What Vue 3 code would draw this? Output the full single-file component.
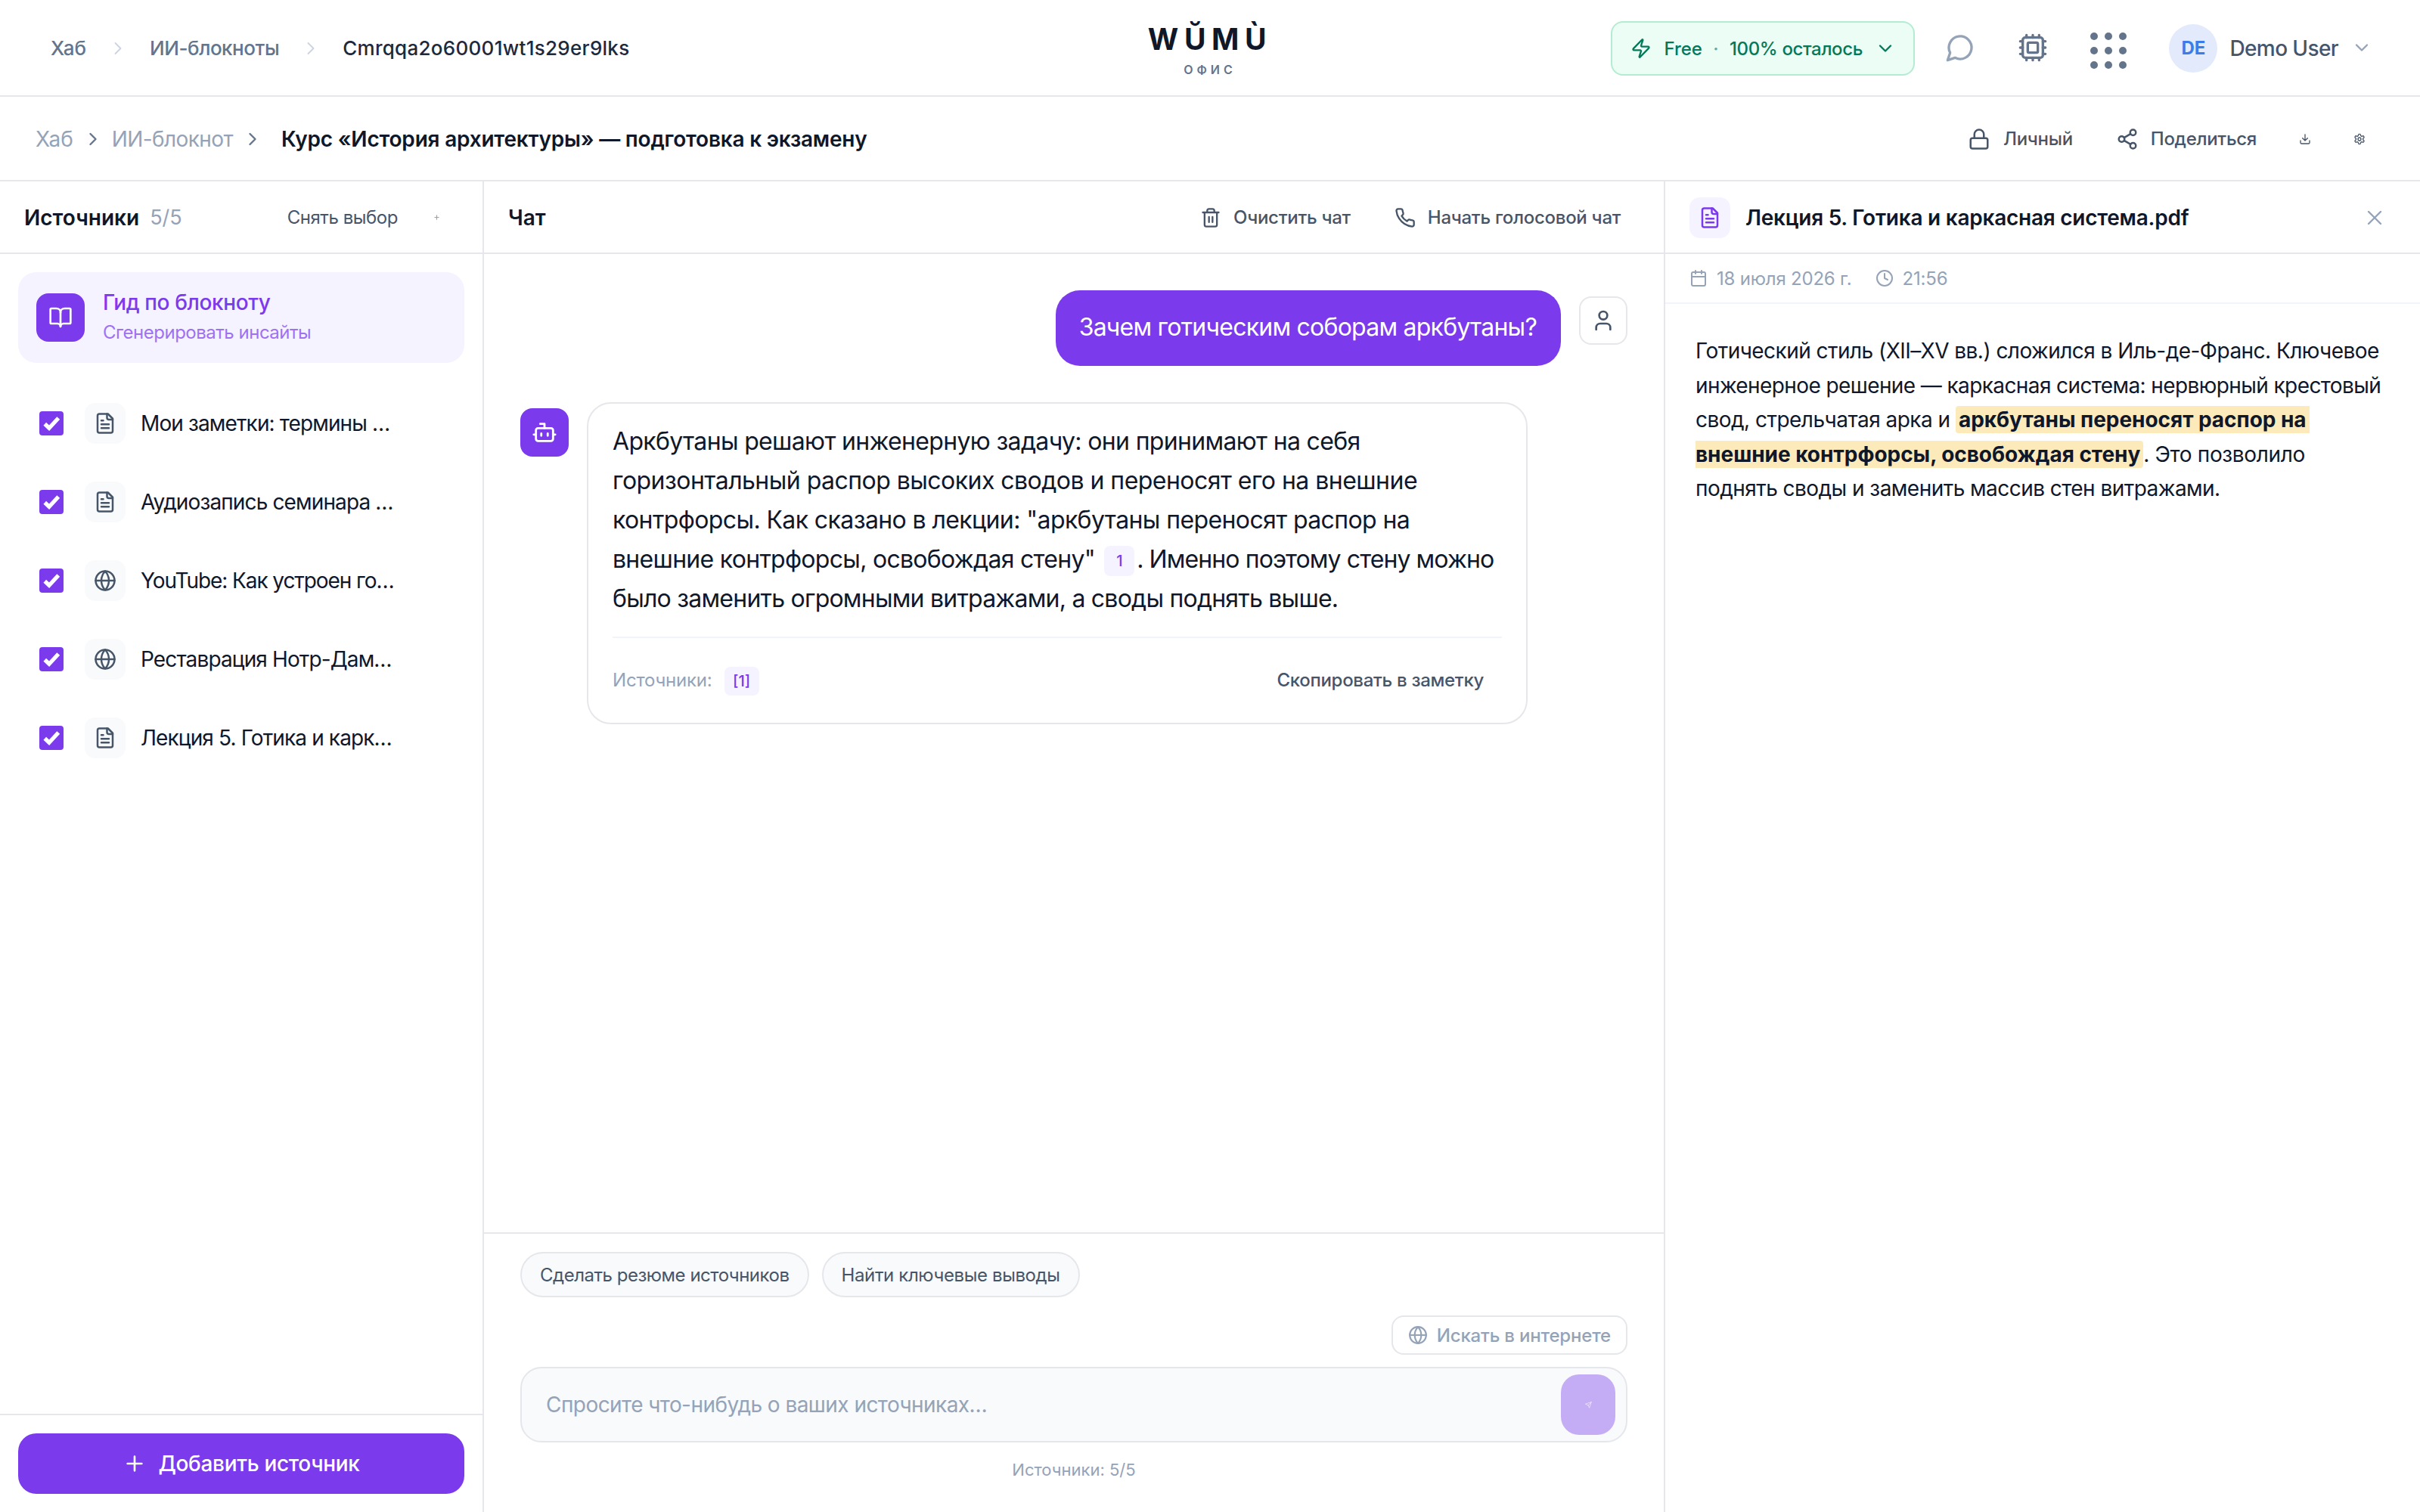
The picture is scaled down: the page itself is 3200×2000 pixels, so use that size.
<template>
  <div class="app">
    <header class="topbar">
      <nav class="trail">
        <span class="t-hub">Хаб</span>
        <Icon name="chevronRight" class="sep" />
        <span class="t-books">ИИ-блокноты</span>
        <Icon name="chevronRight" class="sep" />
        <span class="t-id">Cmrqqa2o60001wt1s29er9lks</span>
      </nav>

      <div class="brand">
        <div class="brand-name">WŬMÙ</div>
        <div class="brand-sub">ОФИС</div>
      </div>

      <div class="top-tools">
        <button class="plan">
          <Icon name="zap" class="plan-zap" />
          <span class="plan-name">Free</span>
          <span class="plan-dot">·</span>
          <span class="plan-left">100% осталось</span>
          <Icon name="chevronDown" class="plan-chevron" />
        </button>
        <Icon name="message" class="tool-message" />
        <Icon name="cpu" class="tool-cpu" />
        <div class="grid-dots">
          <i v-for="n in 9" :key="n" />
        </div>
        <div class="avatar">DE</div>
        <span class="user-name">Demo User</span>
        <Icon name="chevronDown" class="user-chevron" />
      </div>
    </header>

    <div class="subbar">
      <nav class="crumbs">
        <span class="c-hub">Хаб</span>
        <Icon name="chevronRight" class="c-sep" />
        <span class="c-book">ИИ-блокнот</span>
        <Icon name="chevronRight" class="c-sep" />
        <h1>Курс «История архитектуры» — подготовка к экзамену</h1>
      </nav>
      <div class="actions">
        <Icon name="lock" class="a-icon" />
        <span class="a-private">Личный</span>
        <Icon name="share" class="a-icon" />
        <span class="a-share">Поделиться</span>
        <Icon name="download" class="a-small" />
        <Icon name="settings" class="a-small" />
      </div>
    </div>

    <div class="columns">
      <aside class="sources">
        <div class="panel-head">
          <h2 class="sources-title">Источники</h2>
          <span class="sources-count">5/5</span>
          <button class="deselect">Снять выбор</button>
          <Icon name="plus" class="tiny-plus" />
        </div>

        <div class="sources-body">
          <div class="guide">
            <div class="guide-icon">
              <Icon name="book" />
            </div>
            <div class="guide-text">
              <div class="guide-title">Гид по блокноту</div>
              <div class="guide-sub">Сгенерировать инсайты</div>
            </div>
          </div>

          <ul class="source-list">
            <li v-for="source in sources" :key="source.title">
              <span class="check">
                <Icon name="check" />
              </span>
              <span class="source-icon">
                <Icon :name="source.icon" />
              </span>
              <span class="source-title">{{ source.title }}</span>
            </li>
          </ul>
        </div>

        <div class="sources-foot">
          <button class="add-btn">
            <Icon name="plus" />
            <span>Добавить источник</span>
          </button>
        </div>
      </aside>

      <main class="chat">
        <div class="panel-head">
          <h2 class="chat-title">Чат</h2>
          <button class="head-btn">
            <Icon name="trash" />
            <span class="clear-label">Очистить чат</span>
          </button>
          <button class="head-btn">
            <Icon name="phone" />
            <span class="voice-label">Начать голосовой чат</span>
          </button>
        </div>

        <div class="messages">
          <div class="msg-user">
            <div class="bubble-user">Зачем готическим соборам аркбутаны?</div>
            <div class="face-user">
              <Icon name="user" />
            </div>
          </div>

          <div class="msg-bot">
            <div class="face-bot">
              <Icon name="bot" />
            </div>
            <div class="bubble-bot">
              <p>
                <span class="b1">Аркбутаны решают инженерную задачу: они принимают на себя</span><br>
                <span class="b2">горизонтальный распор высоких сводов и переносят его на внешние</span><br>
                <span class="b3">контрфорсы. Как сказано в лекции: "аркбутаны переносят распор на</span><br>
                <span class="b4">внешние контрфорсы, освобождая стену" <span class="cite">1</span></span><span class="b4-end">. Именно поэтому стену можно</span><br>
                <span class="b5">было заменить огромными витражами, а своды поднять выше.</span>
              </p>
              <div class="bubble-foot">
                <span class="foot-label">Источники:</span>
                <span class="foot-cite">[1]</span>
                <button class="copy-btn">Скопировать в заметку</button>
              </div>
            </div>
          </div>
        </div>

        <div class="composer">
          <div class="chips">
            <button class="chip chip-summary">Сделать резюме источников</button>
            <button class="chip chip-findings">Найти ключевые выводы</button>
          </div>
          <button class="web-btn">
            <Icon name="globe" />
            <span>Искать в интернете</span>
          </button>
          <div class="input">
            <span class="placeholder">Спросите что-нибудь о ваших источниках…</span>
            <button class="send">
              <Icon name="send" />
            </button>
          </div>
          <div class="composer-note">Источники: 5/5</div>
        </div>
      </main>

      <aside class="viewer">
        <div class="panel-head">
          <div class="viewer-icon">
            <Icon name="file" />
          </div>
          <h2 class="viewer-title">Лекция 5. Готика и каркасная система.pdf</h2>
          <Icon name="close" class="viewer-close" />
        </div>
        <div class="viewer-meta">
          <Icon name="calendar" />
          <span class="meta-date">18 июля 2026 г.</span>
          <Icon name="clock" />
          <span class="meta-time">21:56</span>
        </div>
        <p class="viewer-text">
          <span class="v1">Готический стиль (XII–XV вв.) сложился в Иль-де-Франс. Ключевое</span><br>
          <span class="v2">инженерное решение — каркасная система: нервюрный крестовый</span><br>
          <span class="v3">свод, стрельчатая арка и </span><mark>аркбутаны переносят распор на&thinsp;<br>
            внешние контрфорсы, освобождая стену</mark><span class="v4">. Это позволило</span><br>
          <span class="v5">поднять своды и заменить массив стен витражами.</span>
        </p>
      </aside>
    </div>
  </div>
</template>

<script setup>
import { h } from 'vue';

const paths = {
  chevronRight: '<path d="m9 18 6-6-6-6"/>',
  chevronDown: '<path d="m6 9 6 6 6-6"/>',
  zap: '<path d="M4 14a1 1 0 0 1-.78-1.63l9.9-10.2a.5.5 0 0 1 .86.46l-1.92 6.02A1 1 0 0 0 13 10h7a1 1 0 0 1 .78 1.63l-9.9 10.2a.5.5 0 0 1-.86-.46l1.92-6.02A1 1 0 0 0 11 14z"/>',
  message: '<path d="M7.9 20A9 9 0 1 0 4 16.1L2 22Z"/>',
  cpu: '<rect width="16" height="16" x="4" y="4" rx="2"/><rect width="8" height="8" x="8" y="8" rx="1"/><path d="M12 20v2M12 2v2M17 20v2M17 2v2M2 12h2M2 17h2M2 7h2M20 12h2M20 17h2M20 7h2M7 20v2M7 2v2"/>',
  lock: '<rect width="18" height="11" x="3" y="11" rx="2"/><path d="M7 11V7a5 5 0 0 1 10 0v4"/>',
  share: '<circle cx="18" cy="5" r="3"/><circle cx="6" cy="12" r="3"/><circle cx="18" cy="19" r="3"/><path d="m8.59 13.51 6.83 3.98M15.41 6.51l-6.82 3.98"/>',
  download: '<path d="M21 15v4a2 2 0 0 1-2 2H5a2 2 0 0 1-2-2v-4M7 10l5 5 5-5M12 15V3"/>',
  settings: '<path d="M12.22 2h-.44a2 2 0 0 0-2 2v.18a2 2 0 0 1-1 1.73l-.43.25a2 2 0 0 1-2 0l-.15-.08a2 2 0 0 0-2.73.73l-.22.38a2 2 0 0 0 .73 2.73l.15.1a2 2 0 0 1 1 1.72v.51a2 2 0 0 1-1 1.74l-.15.09a2 2 0 0 0-.73 2.73l.22.38a2 2 0 0 0 2.73.73l.15-.08a2 2 0 0 1 2 0l.43.25a2 2 0 0 1 1 1.73V20a2 2 0 0 0 2 2h.44a2 2 0 0 0 2-2v-.18a2 2 0 0 1 1-1.73l.43-.25a2 2 0 0 1 2 0l.15.08a2 2 0 0 0 2.73-.73l.22-.39a2 2 0 0 0-.73-2.73l-.15-.08a2 2 0 0 1-1-1.74v-.5a2 2 0 0 1 1-1.74l.15-.09a2 2 0 0 0 .73-2.73l-.22-.38a2 2 0 0 0-2.73-.73l-.15.08a2 2 0 0 1-2 0l-.43-.25a2 2 0 0 1-1-1.73V4a2 2 0 0 0-2-2z"/><circle cx="12" cy="12" r="3"/>',
  plus: '<path d="M5 12h14M12 5v14"/>',
  book: '<path d="M12 7v14"/><path d="M3 18a1 1 0 0 1-1-1V4a1 1 0 0 1 1-1h5a4 4 0 0 1 4 4 4 4 0 0 1 4-4h5a1 1 0 0 1 1 1v13a1 1 0 0 1-1 1h-6a3 3 0 0 0-3 3 3 3 0 0 0-3-3z"/>',
  check: '<path d="M5 12.6 9.6 17 19.4 6.4"/>',
  file: '<path d="M15 2H6a2 2 0 0 0-2 2v16a2 2 0 0 0 2 2h12a2 2 0 0 0 2-2V7Z"/><path d="M14 2v4a2 2 0 0 0 2 2h4M10 9H8M16 13H8M16 17H8"/>',
  globe: '<circle cx="12" cy="12" r="10"/><path d="M12 2a14.5 14.5 0 0 0 0 20 14.5 14.5 0 0 0 0-20M2 12h20"/>',
  trash: '<path d="M3 6h18M19 6v14a2 2 0 0 1-2 2H7a2 2 0 0 1-2-2V6M8 6V4a2 2 0 0 1 2-2h4a2 2 0 0 1 2 2v2M10 11v6M14 11v6"/>',
  phone: '<path d="M22 16.92v3a2 2 0 0 1-2.18 2 19.79 19.79 0 0 1-8.63-3.07 19.5 19.5 0 0 1-6-6 19.79 19.79 0 0 1-3.07-8.67A2 2 0 0 1 4.11 2h3a2 2 0 0 1 2 1.72 12.84 12.84 0 0 0 .7 2.81 2 2 0 0 1-.45 2.11L8.09 9.91a16 16 0 0 0 6 6l1.27-1.27a2 2 0 0 1 2.11-.45 12.84 12.84 0 0 0 2.81.7A2 2 0 0 1 22 16.92z"/>',
  user: '<path d="M19 21v-2a4 4 0 0 0-4-4H9a4 4 0 0 0-4 4v2"/><circle cx="12" cy="7" r="4"/>',
  bot: '<path d="M12 8V4H8"/><rect width="16" height="12" x="4" y="8" rx="2"/><path d="M2 14h2M20 14h2M15 13v2M9 13v2"/>',
  send: '<path d="M22 2 11 13M22 2l-7 20-4-9-9-4Z"/>',
  close: '<path d="M18 6 6 18M6 6l12 12"/>',
  calendar: '<path d="M8 2v4M16 2v4M3 10h18"/><rect width="18" height="18" x="3" y="4" rx="2"/>',
  clock: '<circle cx="12" cy="12" r="10"/><path d="M12 6v6l4 2"/>'
};

const Icon = (props) => h('svg', {
  class: 'icon',
  viewBox: '0 0 24 24',
  innerHTML: paths[props.name]
});
Icon.props = ['name'];

const sources = [
  { icon: 'file', title: 'Мои заметки: термины …' },
  { icon: 'file', title: 'Аудиозапись семинара …' },
  { icon: 'globe', title: 'YouTube: Как устроен го…' },
  { icon: 'globe', title: 'Реставрация Нотр-Дам…' },
  { icon: 'file', title: 'Лекция 5. Готика и карк…' }
];
</script>

<style>
body {
  margin: 0;
  background: #fff;
}
</style>

<style scoped>
.app {
  display: flex;
  flex-direction: column;
  width: 3200px;
  height: 2000px;
  overflow: hidden;
  background: #fff;
  color: #0f172a;
  font-family: Inter, "Noto Sans", sans-serif;
  font-size: 28px;
  white-space: nowrap;
}

.app * {
  box-sizing: border-box;
}

button {
  padding: 0;
  border: none;
  background: none;
  font: inherit;
  color: inherit;
  letter-spacing: inherit;
}

h1,
h2,
p,
ul {
  margin: 0;
  padding: 0;
}

.icon {
  display: block;
  flex: none;
  width: 28px;
  height: 28px;
  fill: none;
  stroke: currentColor;
  stroke-width: 2;
  stroke-linecap: round;
  stroke-linejoin: round;
}

/* top bar */
.topbar {
  display: grid;
  grid-template-columns: 1fr auto 1fr;
  height: 128px;
  border-bottom: 2px solid #e5e7eb;
}

.trail {
  display: flex;
  align-items: center;
  padding: 1px 0 0 67px;
  font-size: 26px;
  font-weight: 500;
  color: #64748b;
}

.sep {
  margin: 0 28px;
  color: #cbd5e1;
  stroke-width: 1.6;
}

.t-books {
  letter-spacing: -0.46px;
}

.t-id {
  color: #1e293b;
  letter-spacing: 0.28px;
}

.brand {
  text-align: center;
  padding-top: 27px;
}

.brand-name {
  font-size: 39px;
  font-weight: 700;
  line-height: 50px;
  letter-spacing: 7.6px;
}

.brand-sub {
  margin-top: 5px;
  font-size: 16px;
  font-weight: 600;
  line-height: 20px;
  letter-spacing: 5px;
  color: #64748b;
}

.top-tools {
  display: flex;
  align-items: center;
  justify-content: flex-end;
  padding-right: 63px;
}

.plan {
  display: flex;
  align-items: center;
  width: 402px;
  height: 72px;
  padding-left: 24px;
  border: 2px solid #b4ecd3;
  border-radius: 16px;
  background: #ecfdf5;
  color: #047857;
  font-size: 24px;
  font-weight: 500;
  margin-top: 2px;
}

.plan-name {
  margin-left: 16px;
}

.plan-dot {
  width: 36px;
  text-align: center;
  opacity: 0.6;
}

.plan-left {
  letter-spacing: -0.35px;
}

.plan-chevron {
  margin-left: 16px;
}

.tool-message {
  width: 40px;
  height: 40px;
  margin-left: 40px;
  color: #94a3b8;
}

.tool-cpu {
  width: 40px;
  height: 40px;
  margin-left: 56px;
  color: #64748b;
}

.grid-dots {
  display: grid;
  grid-template-columns: repeat(3, 10px);
  gap: 9px;
  margin: 8px 0 0 56px;
}

.grid-dots i {
  height: 10px;
  border-radius: 50%;
  background: #64748b;
}

.avatar {
  width: 64px;
  height: 64px;
  margin: 2px 0 0 56px;
  border-radius: 50%;
  background: #e2eafc;
  color: #3b7ce8;
  font-size: 24px;
  font-weight: 700;
  line-height: 64px;
  text-align: center;
}

.user-name {
  margin: 1px 0 0 16px;
  font-weight: 500;
  letter-spacing: -0.6px;
  color: #475569;
}

.user-chevron {
  margin-left: 17px;
  color: #94a3b8;
}

/* notebook bar */
.subbar {
  display: flex;
  justify-content: space-between;
  height: 112px;
  padding: 1px 72px 0 47px;
  border-bottom: 2px solid #e5e7eb;
}

.crumbs,
.actions {
  display: flex;
  align-items: center;
}

.crumbs {
  color: #94a3b8;
}

.c-book {
  letter-spacing: -0.6px;
}

.c-sep {
  margin: 0 11px 0 12px;
  color: #64748b;
}

h1 {
  margin-left: 13px;
  font-size: 28px;
  font-weight: 600;
  letter-spacing: -0.21px;
  color: #0f172a;
}

.actions {
  font-size: 24px;
  font-weight: 500;
  letter-spacing: -0.3px;
  color: #475569;
}

.a-icon {
  width: 30px;
  height: 30px;
}

.a-private {
  margin: 0 57px 0 17px;
}

.a-share {
  margin: 0 56px 0 16px;
}

.a-small {
  width: 16px;
  height: 16px;
}

.a-small + .a-small {
  margin-left: 56px;
}

/* columns */
.columns {
  display: grid;
  grid-template-columns: 640px 1560px 1000px;
  flex: 1;
  min-height: 0;
}

.sources,
.chat,
.viewer {
  display: flex;
  flex-direction: column;
  min-width: 0;
}

.sources {
  border-right: 2px solid #e5e7eb;
}

.viewer {
  border-left: 2px solid #e5e7eb;
}

.panel-head {
  display: flex;
  align-items: center;
  height: 96px;
  padding: 1px 32px 0;
  border-bottom: 2px solid #e5e7eb;
}

h2 {
  font-size: 28px;
  font-weight: 600;
}

.sources .panel-head {
  padding-right: 56px;
}

.sources-count {
  margin-left: 14px;
  font-size: 27px;
  color: #94a3b8;
}

.deselect {
  margin-left: auto;
  font-size: 24px;
  letter-spacing: -0.45px;
  color: #475569;
}

.tiny-plus {
  width: 9px;
  height: 9px;
  margin-left: 47px;
  color: #94a3b8;
  stroke-width: 3;
}

.sources-body {
  flex: 1;
  padding: 24px;
}

.guide {
  display: flex;
  align-items: center;
  height: 120px;
  padding-left: 24px;
  border-radius: 24px;
  background: #f5f3ff;
  color: #7c3aed;
}

.guide-icon {
  display: grid;
  place-items: center;
  width: 64px;
  height: 64px;
  border-radius: 16px;
  background: #7c3aed;
  color: #fff;
}

.guide-icon .icon {
  width: 32px;
  height: 32px;
}

.guide-text {
  margin: -3px 0 0 24px;
}

.guide-title {
  font-weight: 500;
  line-height: 40px;
  letter-spacing: -0.4px;
}

.guide-sub {
  margin-top: 2px;
  font-size: 24px;
  line-height: 36px;
  letter-spacing: -0.5px;
  opacity: 0.7;
}

.source-list {
  margin-top: 28px;
  list-style: none;
}

.source-list li {
  display: flex;
  align-items: center;
  height: 104px;
  padding-left: 28px;
}

.source-list li:nth-child(3) {
  letter-spacing: -0.25px;
}

.check {
  display: grid;
  place-items: center;
  width: 32px;
  height: 32px;
  border-radius: 4px;
  background: #7c3aed;
  color: #fff;
}

.check .icon {
  width: 30px;
  height: 30px;
  stroke-width: 4.2;
  stroke-linecap: butt;
  stroke-linejoin: miter;
}

.source-icon {
  display: grid;
  place-items: center;
  width: 54px;
  height: 54px;
  margin: 0 20px 0 28px;
  border-radius: 14px;
  background: #f8fafc;
  color: #475569;
}

.source-icon .icon {
  width: 30px;
  height: 30px;
}

.source-title {
  letter-spacing: -0.87px;
}

.source-list li:nth-child(3) .source-title {
  letter-spacing: -1.08px;
}

.sources-foot {
  height: 130px;
  padding: 24px;
  border-top: 2px solid #e5e7eb;
}

.add-btn {
  display: flex;
  align-items: center;
  justify-content: center;
  gap: 15px;
  width: 100%;
  height: 80px;
  border-radius: 24px;
  background: #7c3aed;
  color: #fff;
  font-weight: 500;
  letter-spacing: -0.33px;
}

.add-btn .icon {
  width: 32px;
  height: 32px;
}

/* chat */
.chat .panel-head {
  padding-right: 57px;
}

.chat-title {
  margin-right: auto;
}

.head-btn {
  display: flex;
  align-items: center;
  gap: 16px;
  margin-left: 58px;
  font-size: 24px;
  font-weight: 500;
  letter-spacing: -0.28px;
  color: #475569;
}

.messages {
  flex: 1;
  padding: 48px;
}

.msg-user {
  display: flex;
  justify-content: flex-end;
  gap: 24px;
}

.bubble-user {
  height: 100px;
  padding: 0 32px 0 31px;
  border-radius: 32px;
  background: #7c3aed;
  color: #fff;
  font-size: 32px;
  line-height: 98px;
  letter-spacing: -0.76px;
}

.face-user,
.face-bot {
  display: grid;
  place-items: center;
  width: 64px;
  height: 64px;
  margin-top: 8px;
  border-radius: 16px;
}

.face-user {
  border: 2px solid #e5e7eb;
  color: #475569;
}

.face-user .icon {
  width: 32px;
  height: 32px;
}

.face-bot {
  background: #7c3aed;
  color: #fff;
}

.face-bot .icon {
  width: 34px;
  height: 34px;
}

.msg-bot {
  display: flex;
  gap: 24px;
  margin-top: 48px;
}

.bubble-bot {
  width: 1244px;
  height: 426px;
  padding: 24px 32px;
  border: 2px solid #e5e7eb;
  border-radius: 32px;
}

.bubble-bot p {
  height: 286px;
  border-bottom: 2px solid #f1f5f9;
  font-size: 32px;
  line-height: 52px;
}

.b1 {
  letter-spacing: -0.66px;
}

.b2 {
  letter-spacing: -0.53px;
}

.b3 {
  letter-spacing: -0.6px;
}

.b4 {
  letter-spacing: -0.71px;
}

.b4-end {
  letter-spacing: -0.9px;
}

.b5 {
  letter-spacing: -0.77px;
}

.cite {
  display: inline-block;
  width: 40px;
  height: 40px;
  margin: 0 3px 0 4px;
  border-radius: 8px;
  background: #f5f3ff;
  color: #7c3aed;
  font-size: 20px;
  font-weight: 500;
  line-height: 40px;
  text-align: center;
  vertical-align: 2px;
}

.bubble-foot {
  display: flex;
  align-items: center;
  height: 111px;
  padding-right: 24px;
  font-size: 24px;
}

.foot-label {
  letter-spacing: -0.2px;
  color: #94a3b8;
}

.foot-cite {
  width: 46px;
  height: 38px;
  margin: 3px 0 0 16px;
  border-radius: 8px;
  background: #f5f3ff;
  color: #7c3aed;
  font-size: 20px;
  font-weight: 500;
  line-height: 38px;
  text-align: center;
}

.copy-btn {
  margin-left: auto;
  font-weight: 500;
  letter-spacing: -0.3px;
  color: #475569;
}

.composer {
  display: flex;
  flex-direction: column;
  height: 370px;
  padding: 24px 48px 0;
  border-top: 2px solid #e5e7eb;
}

.chips {
  display: flex;
  gap: 17px;
}

.chip {
  height: 60px;
  padding: 0 24px;
  border: 2px solid #e5e7eb;
  border-radius: 30px;
  background: #f8fafc;
  color: #475569;
  font-size: 24px;
  letter-spacing: -0.48px;
}

.chip-findings {
  letter-spacing: -0.38px;
}

.web-btn {
  display: flex;
  align-items: center;
  align-self: flex-end;
  gap: 12px;
  height: 52px;
  margin-top: 24px;
  padding: 0 20px;
  border: 2px solid #e5e7eb;
  border-radius: 16px;
  color: #94a3b8;
  font-size: 24px;
  font-weight: 500;
  letter-spacing: -0.18px;
}

.web-btn .icon {
  width: 26px;
  height: 26px;
}

.input {
  display: flex;
  align-items: center;
  justify-content: space-between;
  height: 100px;
  margin-top: 16px;
  padding: 0 14px 0 32px;
  border: 2px solid #e5e7eb;
  border-radius: 28px;
  background: #f8fafc;
  color: #94a3b8;
}

.placeholder {
  letter-spacing: -0.55px;
}

.send {
  display: grid;
  place-items: center;
  width: 72px;
  height: 80px;
  border-radius: 24px;
  background: #c5adf5;
  color: #f1eafd;
}

.send .icon {
  width: 9px;
  height: 9px;
}

.composer-note {
  margin-top: 20px;
  font-size: 22px;
  line-height: 32px;
  text-align: center;
  color: #94a3b8;
}

/* source viewer */
.viewer-icon {
  display: grid;
  place-items: center;
  width: 54px;
  height: 54px;
  margin-right: 20px;
  border-radius: 14px;
  background: #f5f3ff;
  color: #7c3aed;
}

.viewer-icon .icon {
  width: 30px;
  height: 30px;
}

.viewer .panel-head {
  padding-right: 44px;
}

.viewer-title {
  letter-spacing: -0.25px;
}

.viewer-close {
  width: 32px;
  height: 32px;
  margin-left: auto;
  color: #94a3b8;
  stroke-width: 1.8;
}

.viewer-meta {
  display: flex;
  align-items: center;
  height: 66px;
  padding-left: 32px;
  border-bottom: 2px solid #f1f5f9;
  color: #94a3b8;
  font-size: 24px;
  letter-spacing: -0.2px;
}

.viewer-meta .icon {
  width: 24px;
  height: 24px;
}

.meta-date {
  margin: 0 31px 0 12px;
}

.meta-time {
  margin-left: 12px;
}

.viewer-text {
  padding: 40px 0 0 40px;
  line-height: 45.5px;
}

mark {
  padding: 1px 4px;
  border-radius: 4px;
  background: #fdeabb;
  color: #0f172a;
  font-weight: 700;
  letter-spacing: -0.04px;
}

.v1 {
  letter-spacing: -0.54px;
}

.v2 {
  letter-spacing: -0.6px;
}

.v3 {
  letter-spacing: -0.52px;
}

.v4 {
  letter-spacing: -0.35px;
}

.v5 {
  letter-spacing: -0.54px;
}
</style>
